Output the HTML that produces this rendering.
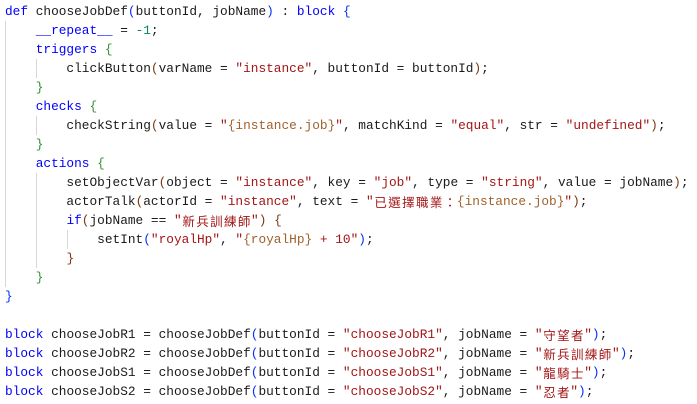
<!DOCTYPE html>
<html><head><meta charset="utf-8">
<style>
html,body{margin:0;padding:0;background:#fff;width:697px;height:404px;overflow:hidden}
pre{margin:0;padding:2px 0 0 5px;font-family:"Liberation Mono","Noto Sans CJK TC",monospace;font-size:12.8px;line-height:19px;color:#1a1a1a;position:relative}
.k{color:#0000ff}
.s{color:#a31515}
.t{color:#a0622d}
.n{color:#098658}
.b1{color:#0431fa}
.b2{color:#319331}
.b3{color:#7b3814}
.c{display:inline-block;width:2ch;height:19px;line-height:19px;vertical-align:top;overflow:hidden;text-align:center;font-family:"Noto Sans CJK TC",sans-serif;font-size:12.5px}
.g{position:absolute;width:1px;background:#d6d6d6}
</style></head><body>
<div class="g" style="left:5px;top:21px;height:266px"></div>
<div class="g" style="left:36px;top:59px;height:19px"></div>
<div class="g" style="left:36px;top:116px;height:19px"></div>
<div class="g" style="left:36px;top:173px;height:95px"></div>
<div class="g" style="left:67px;top:230px;height:19px"></div>
<pre><span class="k">def</span> chooseJobDef<span class="b1">(</span>buttonId, jobName<span class="b1">)</span> : <span class="k">block</span> <span class="b1">{</span>
    <span class="k">__repeat__</span> = <span class="n">-1</span>;
    <span class="k">triggers</span> <span class="b2">{</span>
        clickButton<span class="b3">(</span>varName = <span class="s">"instance"</span>, buttonId = buttonId<span class="b3">)</span>;
    <span class="b2">}</span>
    <span class="k">checks</span> <span class="b2">{</span>
        checkString<span class="b3">(</span>value = <span class="s">"<span class="t">{instance.job}</span>"</span>, matchKind = <span class="s">"equal"</span>, str = <span class="s">"undefined"</span><span class="b3">)</span>;
    <span class="b2">}</span>
    <span class="k">actions</span> <span class="b2">{</span>
        setObjectVar<span class="b3">(</span>object = <span class="s">"instance"</span>, key = <span class="s">"job"</span>, type = <span class="s">"string"</span>, value = jobName<span class="b3">)</span>;
        actorTalk<span class="b3">(</span>actorId = <span class="s">"instance"</span>, text = <span class="s">"<span class="c">已</span><span class="c">選</span><span class="c">擇</span><span class="c">職</span><span class="c">業</span><span class="c">：</span><span class="t">{instance.job}</span>"</span><span class="b3">)</span>;
        <span class="k">if</span><span class="b3">(</span>jobName == <span class="s">"<span class="c">新</span><span class="c">兵</span><span class="c">訓</span><span class="c">練</span><span class="c">師</span>"</span><span class="b3">)</span> <span class="b3">{</span>
            setInt<span class="b1">(</span><span class="s">"royalHp"</span>, <span class="s">"<span class="t">{royalHp}</span> + 10"</span><span class="b1">)</span>;
        <span class="b3">}</span>
    <span class="b2">}</span>
<span class="b1">}</span>

<span class="k">block</span> chooseJobR1 = chooseJobDef<span class="b1">(</span>buttonId = <span class="s">"chooseJobR1"</span>, jobName = <span class="s">"<span class="c">守</span><span class="c">望</span><span class="c">者</span>"</span><span class="b1">)</span>;
<span class="k">block</span> chooseJobR2 = chooseJobDef<span class="b1">(</span>buttonId = <span class="s">"chooseJobR2"</span>, jobName = <span class="s">"<span class="c">新</span><span class="c">兵</span><span class="c">訓</span><span class="c">練</span><span class="c">師</span>"</span><span class="b1">)</span>;
<span class="k">block</span> chooseJobS1 = chooseJobDef<span class="b1">(</span>buttonId = <span class="s">"chooseJobS1"</span>, jobName = <span class="s">"<span class="c">龍</span><span class="c">騎</span><span class="c">士</span>"</span><span class="b1">)</span>;
<span class="k">block</span> chooseJobS2 = chooseJobDef<span class="b1">(</span>buttonId = <span class="s">"chooseJobS2"</span>, jobName = <span class="s">"<span class="c">忍</span><span class="c">者</span>"</span><span class="b1">)</span>;</pre>
</body></html>
